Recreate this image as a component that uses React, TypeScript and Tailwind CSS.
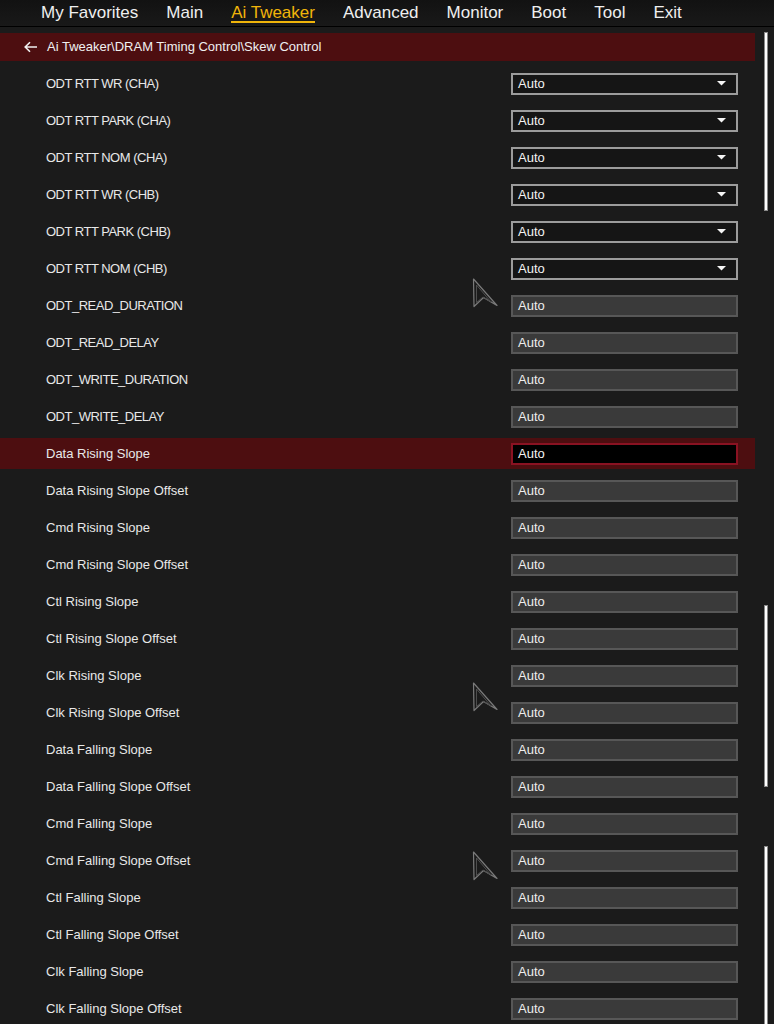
import React from 'react';

type Kind = 'select' | 'text';

interface Row {
    label: string;
    kind: Kind;
}

const tabs = ['My Favorites', 'Main', 'Ai Tweaker', 'Advanced', 'Monitor', 'Boot', 'Tool', 'Exit'];

const rows: Row[] = [
    { label: 'ODT RTT WR (CHA)', kind: 'select' },
    { label: 'ODT RTT PARK (CHA)', kind: 'select' },
    { label: 'ODT RTT NOM (CHA)', kind: 'select' },
    { label: 'ODT RTT WR (CHB)', kind: 'select' },
    { label: 'ODT RTT PARK (CHB)', kind: 'select' },
    { label: 'ODT RTT NOM (CHB)', kind: 'select' },
    { label: 'ODT_READ_DURATION', kind: 'text' },
    { label: 'ODT_READ_DELAY', kind: 'text' },
    { label: 'ODT_WRITE_DURATION', kind: 'text' },
    { label: 'ODT_WRITE_DELAY', kind: 'text' },
    { label: 'Data Rising Slope', kind: 'text' },
    { label: 'Data Rising Slope Offset', kind: 'text' },
    { label: 'Cmd Rising Slope', kind: 'text' },
    { label: 'Cmd Rising Slope Offset', kind: 'text' },
    { label: 'Ctl Rising Slope', kind: 'text' },
    { label: 'Ctl Rising Slope Offset', kind: 'text' },
    { label: 'Clk Rising Slope', kind: 'text' },
    { label: 'Clk Rising Slope Offset', kind: 'text' },
    { label: 'Data Falling Slope', kind: 'text' },
    { label: 'Data Falling Slope Offset', kind: 'text' },
    { label: 'Cmd Falling Slope', kind: 'text' },
    { label: 'Cmd Falling Slope Offset', kind: 'text' },
    { label: 'Ctl Falling Slope', kind: 'text' },
    { label: 'Ctl Falling Slope Offset', kind: 'text' },
    { label: 'Clk Falling Slope', kind: 'text' },
    { label: 'Clk Falling Slope Offset', kind: 'text' },
];

const SELECTED = 10;

// ghost pointer that the screen grabber left on the page
const Pointer: React.FC<{ top: string }> = ({ top }) => (
    <svg className={`absolute left-[472px] ${top}`} width="27" height="30" viewBox="0 0 27 30" fill="none">
        <polygon points="1.5,1 25,27.5 11.5,19.5 2,28.5" stroke="#7a7a7a" strokeWidth="1.2" strokeLinejoin="round" />
        <polygon points="4.5,7 19,24 11,19 4.5,24.5" stroke="#4e4e4e" strokeWidth="1" strokeLinejoin="round" />
    </svg>
);

const ValueBox: React.FC<{ kind: Kind; active: boolean }> = ({ kind, active }) => {
    if (active) {
        return (
            <div className="w-[227px] h-[22px] bg-black border-2 border-[#8a1222] flex items-center pl-[5px] text-[13px] text-[#f2f2f2]">
                Auto
            </div>
        );
    }
    if (kind === 'select') {
        return (
            <div className="w-[227px] h-[22px] bg-[#151515] border-2 border-[#9c9c9c] flex items-center justify-between pl-[5px] pr-[10px] text-[13px] text-[#f2f2f2]">
                <span>Auto</span>
                <svg width="9" height="5" viewBox="0 0 9 5">
                    <polygon points="0,0 9,0 4.5,4.5" fill="#f5f5f5" />
                </svg>
            </div>
        );
    }
    return (
        <div className="w-[227px] h-[22px] bg-[#3a3a3a] border-2 border-[#575757] flex items-center pl-[5px] text-[13px] text-[#ededed]">
            Auto
        </div>
    );
};

export default function App() {
    return (
        <div className="relative w-[774px] h-[1024px] overflow-hidden bg-[#1b1b1b] font-['Liberation_Sans',Arial,sans-serif]">
            {/* Top menu */}
            <div className="h-[27px] bg-gradient-to-b from-[#121212] to-[#191919] border-b border-black flex items-start pl-[41px] gap-[28px]">
                {tabs.map((t) => (
                    <div
                        key={t}
                        className={
                            t === 'Ai Tweaker'
                                ? 'pt-[4px] text-[17px] leading-[17px] text-[#f0b40a] border-b-2 border-[#f0b40a]'
                                : 'pt-[4px] text-[17px] leading-[17px] text-[#efefef]'
                        }
                    >
                        {t}
                    </div>
                ))}
            </div>

            {/* Breadcrumb */}
            <div className="mt-[6px] w-[755px] h-[28px] bg-[#4d0e10] flex items-center pl-[24px] gap-[9px] text-[13px] text-[#f0f0f0]">
                <svg width="14" height="12" viewBox="0 0 14 12" fill="none" stroke="#f0f0f0" strokeWidth="1.6">
                    <path d="M13 6H1.5M6 1.2L1.2 6 6 10.8" />
                </svg>
                <span>Ai Tweaker\DRAM Timing Control\Skew Control</span>
            </div>

            {/* Items */}
            <div className="mt-[4px] flex flex-col">
                {rows.map((r, i) => (
                    <div key={r.label} className="h-[37px] py-[3px]">
                        <div
                            className={`w-[755px] h-[31px] flex items-center ${i === SELECTED ? 'bg-[#4d0e10]' : ''}`}
                        >
                            <div
                                className={`w-[511px] pl-[46px] text-[13px] text-[#e8e8e8] ${
                                    r.label === r.label.toUpperCase() ? 'tracking-[-0.5px]' : ''
                                }`}
                            >
                                {r.label}
                            </div>
                            <ValueBox kind={r.kind} active={i === SELECTED} />
                        </div>
                    </div>
                ))}
            </div>

            {/* Scrollbar thumbs */}
            <div className="absolute left-[764px] top-[32px] w-[4px] h-[179px] bg-white border border-[#8a8a8a]" />
            <div className="absolute left-[764px] top-[605px] w-[4px] h-[182px] bg-white border border-[#8a8a8a]" />
            <div className="absolute left-[764px] top-[846px] w-[4px] h-[180px] bg-white border border-[#8a8a8a]" />

            <Pointer top="top-[278px]" />
            <Pointer top="top-[682px]" />
            <Pointer top="top-[851px]" />
        </div>
    );
}
